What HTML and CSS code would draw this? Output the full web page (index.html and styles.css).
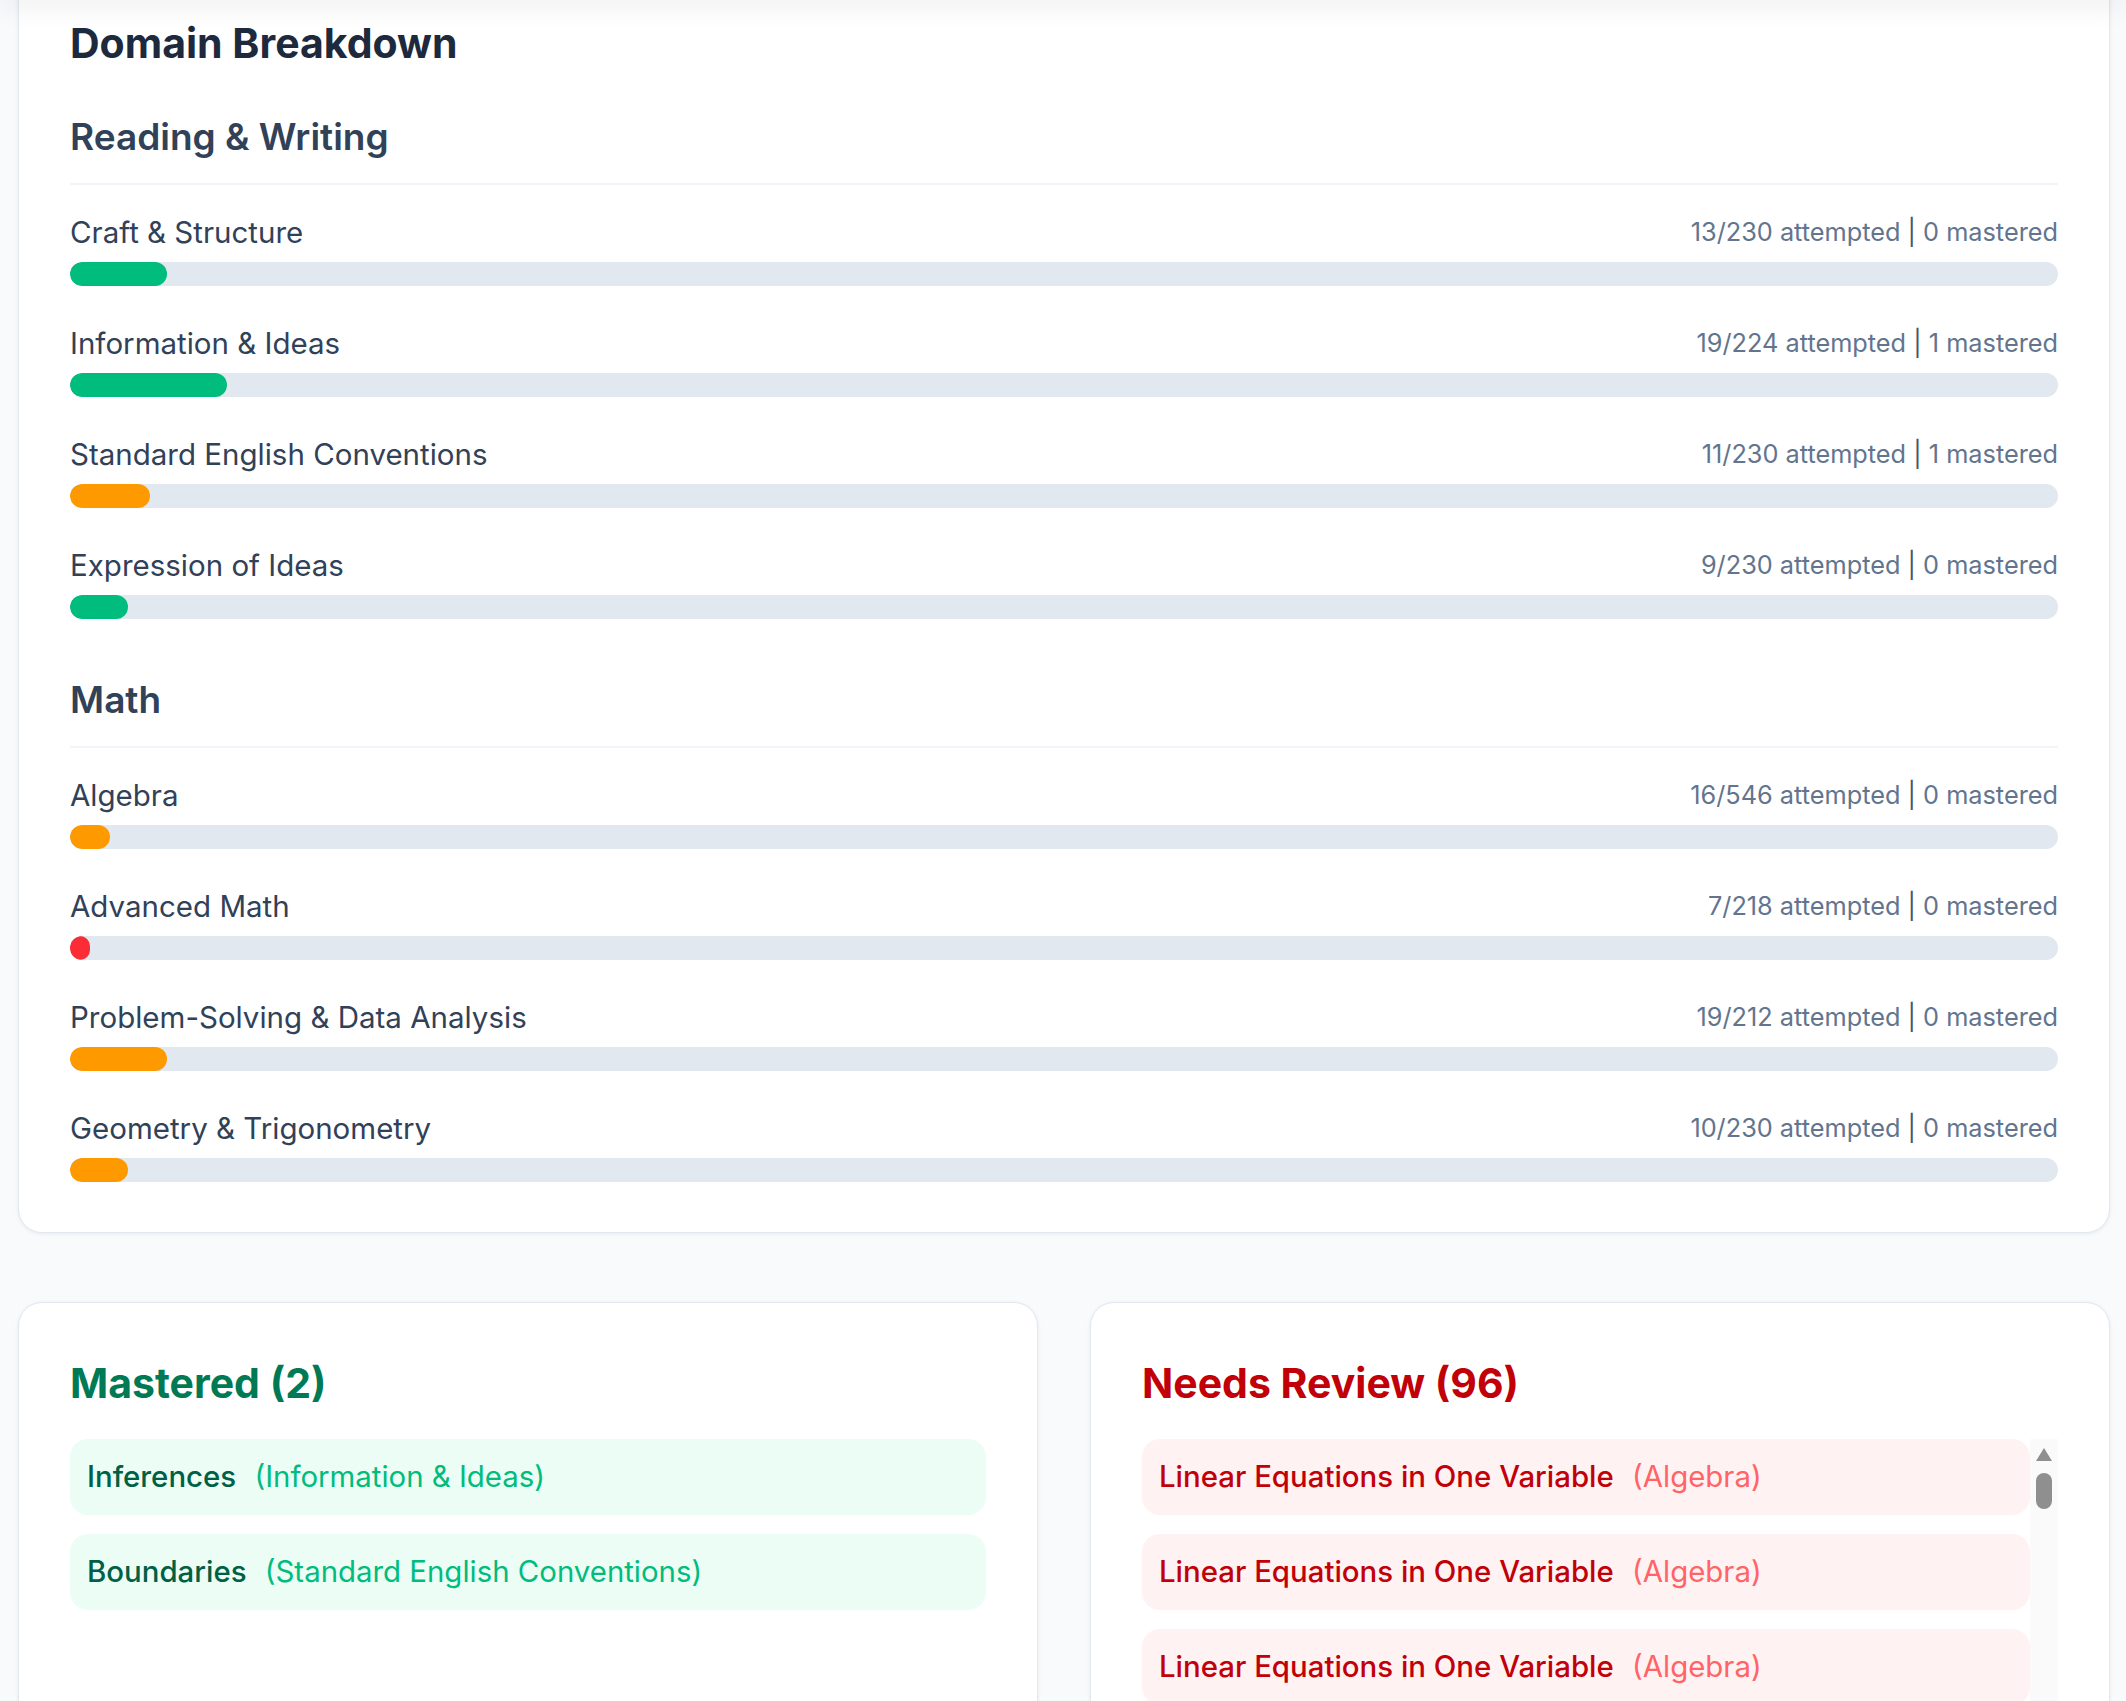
FILE: index.html
```html
<!DOCTYPE html>
<html lang="en">

<head>
    <meta charset="UTF-8">
    <title>Progress</title>
    <link rel="stylesheet" href="styles.css">
</head>

<body>
    <div class="top-shade"></div>
    <main class="page">
        <section class="card breakdown">
            <h2 class="card-title">Domain Breakdown</h2>

            <div class="domain">
                <h3 class="domain-name">Reading &amp; Writing</h3>
                <div class="skill">
                    <div class="skill-head">
                        <span class="skill-name">Craft &amp; Structure</span>
                        <span class="skill-stats">13/230 attempted <span class="sep">|</span> 0 mastered</span>
                    </div>
                    <div class="track"><div class="fill good" style="width: 4.9%"></div></div>
                </div>
                <div class="skill">
                    <div class="skill-head">
                        <span class="skill-name">Information &amp; Ideas</span>
                        <span class="skill-stats">19/224 attempted <span class="sep">|</span> 1 mastered</span>
                    </div>
                    <div class="track"><div class="fill good" style="width: 7.9%"></div></div>
                </div>
                <div class="skill">
                    <div class="skill-head">
                        <span class="skill-name">Standard English Conventions</span>
                        <span class="skill-stats">11/230 attempted <span class="sep">|</span> 1 mastered</span>
                    </div>
                    <div class="track"><div class="fill ok" style="width: 4%"></div></div>
                </div>
                <div class="skill">
                    <div class="skill-head">
                        <span class="skill-name">Expression of Ideas</span>
                        <span class="skill-stats">9/230 attempted <span class="sep">|</span> 0 mastered</span>
                    </div>
                    <div class="track"><div class="fill good" style="width: 2.9%"></div></div>
                </div>
            </div>

            <div class="domain">
                <h3 class="domain-name">Math</h3>
                <div class="skill">
                    <div class="skill-head">
                        <span class="skill-name">Algebra</span>
                        <span class="skill-stats">16/546 attempted <span class="sep">|</span> 0 mastered</span>
                    </div>
                    <div class="track"><div class="fill ok" style="width: 2%"></div></div>
                </div>
                <div class="skill">
                    <div class="skill-head">
                        <span class="skill-name">Advanced Math</span>
                        <span class="skill-stats">7/218 attempted <span class="sep">|</span> 0 mastered</span>
                    </div>
                    <div class="track"><div class="fill bad" style="width: 1%"></div></div>
                </div>
                <div class="skill">
                    <div class="skill-head">
                        <span class="skill-name">Problem-Solving &amp; Data Analysis</span>
                        <span class="skill-stats">19/212 attempted <span class="sep">|</span> 0 mastered</span>
                    </div>
                    <div class="track"><div class="fill ok" style="width: 4.9%"></div></div>
                </div>
                <div class="skill">
                    <div class="skill-head">
                        <span class="skill-name">Geometry &amp; Trigonometry</span>
                        <span class="skill-stats">10/230 attempted <span class="sep">|</span> 0 mastered</span>
                    </div>
                    <div class="track"><div class="fill ok" style="width: 2.9%"></div></div>
                </div>
            </div>
        </section>

        <div class="lists">
            <section class="card list-card">
                <h2 class="list-title mastered-title">Mastered (2)</h2>
                <div class="topic-list">
                    <div class="topic mastered">
                        <span class="topic-name">Inferences</span>
                        <span class="topic-domain">(Information &amp; Ideas)</span>
                    </div>
                    <div class="topic mastered">
                        <span class="topic-name">Boundaries</span>
                        <span class="topic-domain">(Standard English Conventions)</span>
                    </div>
                </div>
            </section>

            <section class="card list-card">
                <h2 class="list-title review-title">Needs Review (96)</h2>
                <div class="review-box">
                    <div class="topic-list scroll">
                        <div class="topic review">
                            <span class="topic-name">Linear Equations in One Variable</span>
                            <span class="topic-domain">(Algebra)</span>
                        </div>
                        <div class="topic review">
                            <span class="topic-name">Linear Equations in One Variable</span>
                            <span class="topic-domain">(Algebra)</span>
                        </div>
                        <div class="topic review">
                            <span class="topic-name">Linear Equations in One Variable</span>
                            <span class="topic-domain">(Algebra)</span>
                        </div>
                    </div>
                    <div class="scrollbar">
                        <div class="scroll-arrow"></div>
                        <div class="scroll-thumb"></div>
                    </div>
                </div>
            </section>
        </div>
    </main>
</body>

</html>
```

FILE: styles.css
```css
/* page */
body {
    margin: 0;
    background-color: #f8fafc;
    font-family: Inter, "Noto Sans", sans-serif;
    color: #314158;
}

.top-shade {
    position: fixed;
    top: -20px;
    left: 0;
    right: 0;
    height: 20px;
    box-shadow: 0 6px 28px rgba(15, 23, 42, 0.08);
    z-index: 5;
}

.page {
    margin-top: -34px;
    padding: 0 16px 0 18px;
}

.card {
    background-color: #fff;
    border: 1px solid #e2e8f0;
    border-radius: 24px;
    box-shadow: 0 1px 4px rgba(15, 23, 42, 0.07);
    padding: 51px;
}

/* domain breakdown */
.breakdown {
    padding-bottom: 50px;
}

.card-title {
    margin: 0 0 45px;
    font-size: 41px;
    line-height: 50px;
    font-weight: 700;
    color: #1d293d;
}

.domain {
    display: flex;
    flex-direction: column;
    gap: 36px;
}

.domain + .domain {
    margin-top: 57px;
}

.domain-name {
    margin: 0 0 -10px;
    padding-bottom: 22px;
    border-bottom: 2px solid #f1f5f9;
    font-size: 37px;
    line-height: 48px;
    font-weight: 600;
    color: #314158;
}

.skill-head {
    display: flex;
    justify-content: space-between;
    align-items: center;
    margin-bottom: 9px;
    line-height: 42px;
}

.skill-name {
    font-size: 29.5px;
    color: #314158;
}

.skill-stats {
    font-size: 25.3px;
    color: #62748e;
}

.sep {
    color: #45556c;
}

.track {
    height: 24px;
    border-radius: 12px;
    background-color: #e2e8f0;
    overflow: hidden;
}

.fill {
    height: 100%;
    border-radius: 12px;
}

.fill.good {
    background-color: #00bc7d;
}

.fill.ok {
    background-color: #fe9a00;
}

.fill.bad {
    background-color: #fb2c36;
}

/* mastered / needs review */
.lists {
    display: grid;
    grid-template-columns: 1fr 1fr;
    gap: 52px;
    margin-top: 69px;
}

.list-card {
    height: 520px;
    padding-top: 53px;
}

.list-title {
    margin: 0 0 29px;
    font-size: 41px;
    line-height: 54px;
    font-weight: 700;
}

.mastered-title {
    color: #007a55;
}

.review-title {
    color: #c10007;
}

.topic-list {
    display: flex;
    flex-direction: column;
    gap: 19px;
}

.topic {
    flex-shrink: 0;
    padding: 17px;
    border-radius: 18px;
    font-size: 29.4px;
    line-height: 42px;
}

.topic-name {
    font-weight: 500;
    margin-right: 10px;
}

.topic.mastered {
    background-color: #ecfdf5;
}

.topic.mastered .topic-name {
    color: #006045;
}

.topic.mastered .topic-domain {
    color: #00bc7d;
}

.topic.review {
    background-color: #fef2f2;
}

.topic.review .topic-name {
    color: #c10007;
}

.topic.review .topic-domain {
    color: #ff6467;
}

.review-box {
    display: flex;
    height: 300px;
}

.scroll {
    flex: 1;
    overflow: hidden;
}

.scrollbar {
    width: 28px;
    flex-shrink: 0;
    background-color: #fafafa;
    display: flex;
    flex-direction: column;
    align-items: center;
}

.scroll-arrow {
    margin-top: 9px;
    width: 0;
    height: 0;
    border-left: 8px solid transparent;
    border-right: 8px solid transparent;
    border-bottom: 13px solid #8f8f8f;
}

.scroll-thumb {
    margin-top: 12px;
    width: 16px;
    height: 36px;
    border-radius: 8px;
    background-color: #8f8f8f;
}
```
